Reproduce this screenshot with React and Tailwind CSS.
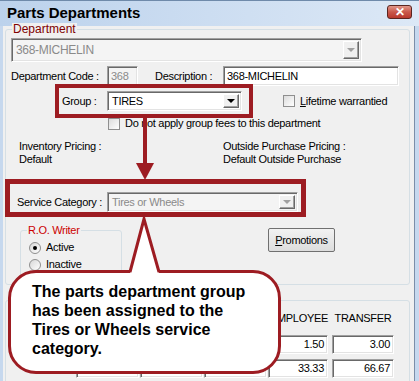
import React from "react";

const ui = "font-['Liberation_Sans',sans-serif] text-[11px] leading-[13px] tracking-[-0.3px] whitespace-nowrap";

const sunken =
  "border border-t-[#a0a0a0] border-l-[#a0a0a0] border-b-white border-r-white shadow-[inset_1px_1px_0_#696969,inset_-1px_-1px_0_#e3e3e3]";

function ArrowBtn({ disabled }) {
  return (
    <div className="w-[16px] h-full flex items-center justify-center bg-[#f0f0f0] border border-t-white border-l-white border-b-[#696969] border-r-[#696969] shadow-[inset_-1px_-1px_0_#a0a0a0]">
      <div
        className={`w-0 h-0 border-l-[4px] border-r-[4px] border-t-[4px] border-l-transparent border-r-transparent ${
          disabled ? "border-t-[#a0a0a0]" : "border-t-black"
        }`}
      />
    </div>
  );
}

function Combo({ value, disabled, className }) {
  return (
    <div className={`${sunken} flex items-stretch p-[2px] ${disabled ? "bg-[#f4f4f4]" : "bg-white"} ${className}`}>
      <div className={`flex-1 flex items-center pl-[2px] ${disabled ? "text-[#8a8a8a]" : "text-black"}`}>{value}</div>
      <ArrowBtn disabled={disabled} />
    </div>
  );
}

function Check({ children, className }) {
  return (
    <div className={`flex items-center ${className}`}>
      <div className="w-[12px] h-[12px] border border-[#8f8f8f] bg-gradient-to-br from-[#dcdcdc] to-white" />
      <span className="ml-[5px]">{children}</span>
    </div>
  );
}

function Radio({ checked, children }) {
  return (
    <div className="flex items-center h-[17px]">
      <div className="w-[12px] h-[12px] rounded-full border border-[#8f8f8f] bg-gradient-to-br from-[#d8d8d8] to-white flex items-center justify-center">
        {checked && <div className="w-[4px] h-[4px] rounded-full bg-black" />}
      </div>
      <span className="ml-[5px]">{children}</span>
    </div>
  );
}

function Cell({ value, className = "" }) {
  return (
    <div className={`${sunken} bg-white h-[19px] flex items-center justify-end pr-[3px] ${className}`}>{value}</div>
  );
}

export default function App() {
  return (
    <div className={`${ui} relative w-[419px] h-[381px] overflow-hidden bg-[#c6d8ee] text-black`}>
      {/* title bar */}
      <div className="h-[26px] flex items-start bg-gradient-to-r from-[#bcd2ec] to-[#dce8f6] border-t border-[#6f8aaa]">
        <div className="pl-[7px] pt-[3px] font-bold text-[15px] leading-[17px] tracking-normal">
          Parts Departments
        </div>
        <div className="ml-auto mr-[7px] mt-[4px] w-[25px] h-[14px] rounded-[3px] border border-[#5a2520] bg-gradient-to-b from-[#e0968a] via-[#c9584b] to-[#b8382d] flex items-center justify-center">
          <span className="font-bold text-white text-[12px] leading-[12px]">✕</span>
        </div>
      </div>

      {/* client area */}
      <div className="ml-[3px] w-[412px] h-[355px] bg-[#f0f0f0] border-r border-[#7b8ea8] pt-[3px]">
        <div className="relative ml-[2px] w-[405px] h-[256px] border border-[#d5dfe5] rounded-[3px] pl-[5px]">
          <div className="absolute left-[6px] -top-[7px] px-[1px] bg-[#f0f0f0] text-[#800000] text-[12px] tracking-normal">Department</div>

          <Combo value="368-MICHELIN" disabled className="mt-[8px] w-[351px] h-[24px] text-[12px]" />

          <div className="flex items-center mt-[4px] h-[20px]">
            <div className="w-[96px]">Department Code :</div>
            <div className={`${sunken} bg-[#f4f4f4] text-[#8a8a8a] w-[31px] h-[20px] flex items-center pl-[3px]`}>368</div>
            <div className="ml-[17px] w-[68px]">Description :</div>
            <div className={`${sunken} bg-white w-[176px] h-[20px] flex items-center pl-[3px]`}>368-MICHELIN</div>
          </div>

          <div className="flex items-center mt-[5px] h-[20px]">
            <div className="ml-[51px] w-[45px]">Group :</div>
            <Combo value="TIRES" className="w-[135px] h-[20px]" />
            <Check className="ml-[41px]">
              <span className="underline">L</span>ifetime warrantied
            </Check>
          </div>

          <Check className="mt-[6px] ml-[97px]">Do not apply group fees to this department</Check>

          <div className="flex mt-[10px]">
            <div className="ml-[8px] w-[204px]">
              <div>Inventory Pricing :</div>
              <div>Default</div>
            </div>
            <div>
              <div>Outside Purchase Pricing :</div>
              <div>Default Outside Purchase</div>
            </div>
          </div>

          <div className="flex items-center mt-[26px] h-[20px]">
            <div className="ml-[6px] w-[90px]">Service Category :</div>
            <Combo value="Tires or Wheels" disabled className="w-[191px] h-[20px]" />
          </div>

          <div className="flex items-start mt-[18px]">
            <div className="relative ml-[9px] w-[102px] h-[60px] border border-[#d5dfe5] rounded-[3px] pt-[8px] pl-[8px]">
              <div className="absolute left-[6px] -top-[7px] px-[1px] bg-[#f0f0f0] text-[#cc0000]">R.O. Writer</div>
              <Radio checked>Active</Radio>
              <Radio>Inactive</Radio>
            </div>
            <div className="ml-[146px] -mt-[2px] w-[67px] h-[24px] flex items-center justify-center bg-gradient-to-b from-[#f2f2f2] to-[#dddddd] border border-[#707070] rounded-[2px]">
              <span className="underline">P</span>romotions
            </div>
          </div>
        </div>

        {/* rates group */}
        <div className="relative mt-[15px] ml-[2px] w-[405px] h-[100px] border border-[#d5dfe5] rounded-[3px]">
          <div className="flex mt-[11px] ml-[70px] gap-[1px]">
            <div className="w-[63px]" />
            <div className="w-[63px]" />
            <div className="w-[63px]" />
            <div className="w-[60px] text-right">EMPLOYEE</div>
            <div className="w-[62px] ml-[3px] text-center">TRANSFER</div>
          </div>
          <div className="flex mt-[10px] ml-[70px] gap-[1px]">
            <Cell className="w-[63px]" />
            <Cell className="w-[63px]" />
            <Cell className="w-[63px]" />
            <Cell className="w-[60px]" value="1.50" />
            <Cell className="w-[62px] ml-[3px]" value="3.00" />
          </div>
          <div className="flex mt-[5px] ml-[70px] gap-[1px]">
            <Cell className="w-[63px]" />
            <Cell className="w-[63px]" />
            <Cell className="w-[63px]" />
            <Cell className="w-[60px]" value="33.33" />
            <Cell className="w-[62px] ml-[3px]" value="66.67" />
          </div>
        </div>
      </div>

      {/* annotations */}
      <div className="absolute left-[55px] top-[84px] w-[198px] h-[34px] border-[4px] border-[#9d1c22]" />
      <div className="absolute left-[5px] top-[179px] w-[301px] h-[38px] border-[5px] border-[#9d1c22]" />
      <svg className="absolute left-0 top-0" width="419" height="381">
        <rect x="143" y="118" width="4" height="48" fill="#9d1c22" />
        <polygon points="136,163 154,163 145,180" fill="#9d1c22" />
      </svg>

      <div className="absolute left-[8px] top-[270px] w-[273px] h-[104px] bg-white border-[3px] border-[#9d1c22] rounded-[28px] pl-[21px] pt-[9px] font-bold text-[16px] leading-[19px] tracking-normal">
        The parts department group
        <br />
        has been assigned to the
        <br />
        Tires or Wheels service
        <br />
        category.
      </div>
      <svg className="absolute left-0 top-0" width="419" height="381">
        <polygon points="144,218 130,274 159,274" fill="white" />
        <polyline points="130,272 144,219 159,272" fill="none" stroke="#9d1c22" strokeWidth="3" strokeLinejoin="miter" />
      </svg>
    </div>
  );
}
